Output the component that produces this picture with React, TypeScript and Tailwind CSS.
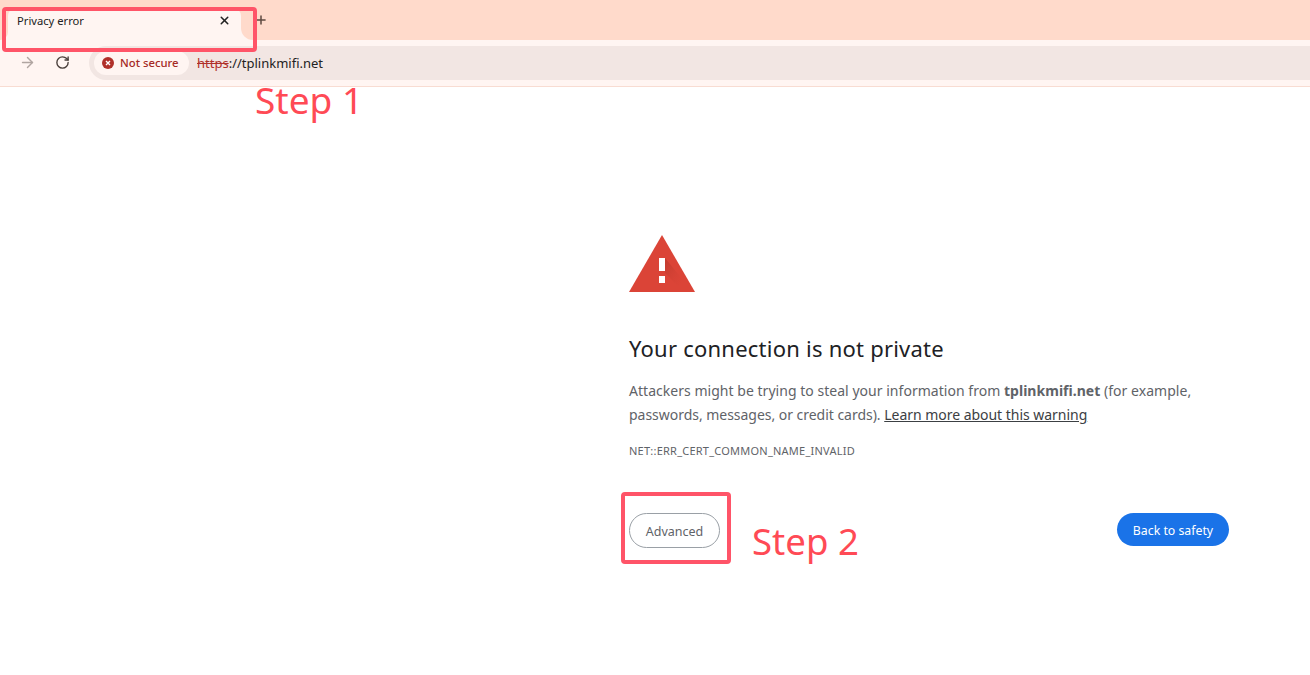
import { ArrowRight, RotateCw, X, Plus } from "lucide-react";

const sans = "font-['Noto_Sans',sans-serif]";

function Warning() {
  return (
    <svg width="66" height="57" viewBox="0 0 66 57" className="block">
      <defs>
        <linearGradient id="s" x1="0" y1="0" x2="1" y2="1">
          <stop offset="0" stopColor="#a93226" stopOpacity="0.55" />
          <stop offset="1" stopColor="#db4437" stopOpacity="0" />
        </linearGradient>
      </defs>
      <polygon points="33,0 66,57 0,57" fill="#db4437" />
      <polygon points="36,23 54,45 50,52 36,38" fill="url(#s)" />
      <rect x="30" y="23" width="6" height="13" fill="#fff" />
      <rect x="30" y="41" width="6" height="7" fill="#fff" />
    </svg>
  );
}

export default function App() {
  return (
    <div className={`relative h-[675px] w-[1310px] overflow-hidden bg-white ${sans}`}>
      <div className="flex h-10 bg-[#fff5f2]">
        <div className="w-2 rounded-br-lg bg-[#ffdacb]" />
        <div className="w-[233px] bg-[#ffdacb]">
          <div className="mt-2 flex h-8 items-start justify-between rounded-t-lg bg-[#fff5f2] pl-[9px] pr-[10px] pt-[5px]">
            <span className="text-[11.2px] leading-4 text-[#222]">Privacy error</span>
            <X size={13} strokeWidth={2.8} className="mt-[1px] text-[#222]" />
          </div>
        </div>
        <div className="flex-1 rounded-bl-xl bg-[#ffdacb]">
          <Plus size={14} strokeWidth={2.6} className="ml-[13px] mt-[13px] text-[#5f4a42]" />
        </div>
      </div>

      <div className="flex h-[47px] items-center border-b border-[#f8dcd2] bg-[#fff5f2] pb-[1px]">
        <ArrowRight size={17} strokeWidth={2} className="ml-[19px] text-[#b0a5a1]" />
        <RotateCw size={15} strokeWidth={2.2} className="ml-[19px] text-[#4a3f3b]" />
        <div className="ml-[19px] flex h-[34px] flex-1 items-center rounded-l-[17px] bg-[#f2e6e3] pl-[5px]">
          <div className="flex h-6 w-[95px] items-center rounded-xl bg-[#fff5f2] pl-2">
            <svg width="12" height="12" viewBox="0 0 12 12">
              <circle cx="6" cy="6" r="6" fill="#b0302a" />
              <path d="M4 4l4 4M8 4l-4 4" stroke="#fff" strokeWidth="1.4" />
            </svg>
            <span className="ml-[6px] pt-[2px] text-[11.3px] font-medium text-[#a52a25]">Not secure</span>
          </div>
          <span className="ml-[8px] pt-[2px] text-[13px] text-[#222]">
            <span className="text-[#b0302a] line-through">https</span>://tplinkmifi.net
          </span>
        </div>
      </div>

      <main className="ml-[629px] w-[600px] pt-[148px]">
        <Warning />
        <h1 className="mt-[41px] text-[22px] leading-[30px] tracking-[0.23px] text-[#202124]">
          Your connection is not private
        </h1>
        <p className="mt-[16px] text-[14px] leading-6 tracking-[0.03px] text-[#5f6368]">
          Attackers might be trying to steal your information from{" "}
          <strong className="font-bold">tplinkmifi.net</strong> (for example,{" "}
          <span className="tracking-[-0.03px]">passwords, messages, or credit cards).</span>{" "}
          <span className="tracking-[-0.03px] text-[#3c4043] underline">Learn more about this warning</span>
        </p>
        <div className="mt-[15.5px] text-[11px] leading-4 tracking-[0.23px] text-[#5f6368]">
          NET::ERR_CERT_COMMON_NAME_INVALID
        </div>
        <div className="mt-[54.5px] flex items-start justify-between">
          <button className="h-[35px] w-[91px] rounded-[18px] border border-[#9aa0a6] bg-white pt-[4px] text-[12.5px] text-[#5f6368]">
            Advanced
          </button>
          <button className="h-[33px] w-[112px] rounded-[17px] bg-[#1a73e8] pt-[4px] text-[12.3px] text-white">
            Back to safety
          </button>
        </div>
      </main>

      <div className="absolute left-[2px] top-[7px] h-[45px] w-[255px] rounded-[4px] border-4 border-[#ff5468]" />
      <div className="absolute left-[621px] top-[492px] h-[72px] w-[110px] rounded-[4px] border-4 border-[#ff5468]" />
      <span className="absolute left-[255px] top-[75px] text-[37px] leading-[50px] text-[#ff4a55]">Step 1</span>
      <span className="absolute left-[752px] top-[516px] text-[36.6px] leading-[50px] text-[#ff4a55]">Step 2</span>
    </div>
  );
}
